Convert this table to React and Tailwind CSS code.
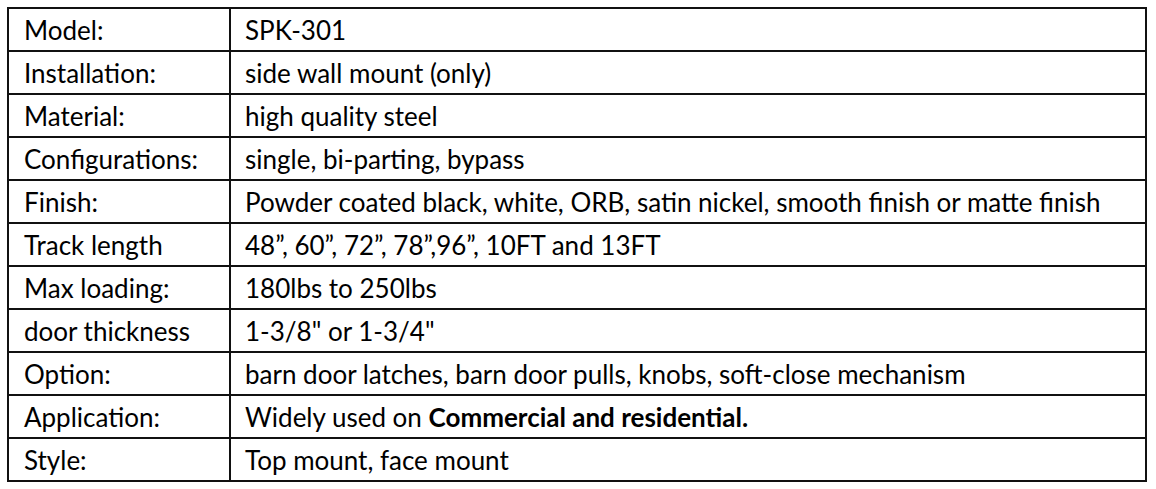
import React from "react";

const rows = [
  ["Model:", "SPK-301"],
  ["Installation:", "side wall mount (only)"],
  ["Material:", "high quality steel"],
  ["Configurations:", "single, bi-parting, bypass"],
  ["Finish:", "Powder coated black, white, ORB, satin nickel, smooth finish or matte finish"],
  ["Track length", "48”, 60”, 72”, 78”,96”, 10FT and 13FT"],
  ["Max loading:", "180lbs to 250lbs"],
  ["door thickness", '1-3/8" or 1-3/4"'],
  ["Option:", "barn door latches, barn door pulls, knobs, soft-close mechanism"],
  [
    "Application:",
    <>
      Widely used on <b className="font-bold">Commercial and residential.</b>
    </>,
  ],
  ["Style:", "Top mount, face mount"],
];

export default function App() {
  return (
    <div className="min-h-[489px] bg-white pl-[7px] pt-[7px]">
      <table
        className="w-[1140px] table-fixed border-collapse text-[26px] text-black"
        style={{ fontFamily: "Lato, 'Liberation Sans', sans-serif" }}
      >
        <colgroup>
          <col className="w-[222px]" />
          <col />
        </colgroup>
        <tbody>
          {rows.map(([label, value], i) => (
            <tr key={i} className="h-[43px]">
              <td className="border-2 border-[#111] pl-[15px] align-middle leading-none whitespace-nowrap">{label}</td>
              <td className="border-2 border-[#111] pl-[14px] align-middle leading-none whitespace-nowrap">{value}</td>
            </tr>
          ))}
        </tbody>
      </table>
    </div>
  );
}
